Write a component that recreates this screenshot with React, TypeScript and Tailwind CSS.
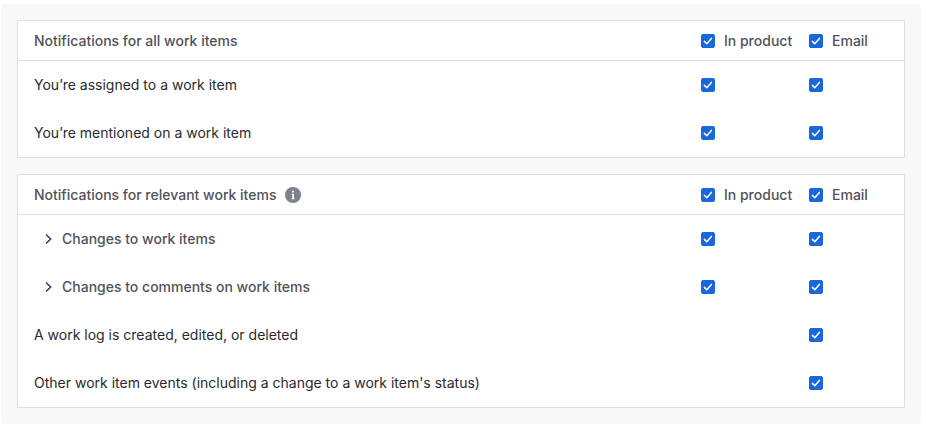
import { useState } from "react";

type Channel = "product" | "email";

interface Row {
  id: string;
  label: string;
  channels: Channel[];
  expandable?: boolean;
}

interface Group {
  id: string;
  title: string;
  info?: boolean;
  rows: Row[];
}

const CHANNELS: { id: Channel; label: string }[] = [
  { id: "product", label: "In product" },
  { id: "email", label: "Email" },
];

const GROUPS: Group[] = [
  {
    id: "all",
    title: "Notifications for all work items",
    rows: [
      { id: "assigned", label: "You’re assigned to a work item", channels: ["product", "email"] },
      { id: "mentioned", label: "You’re mentioned on a work item", channels: ["product", "email"] },
    ],
  },
  {
    id: "relevant",
    title: "Notifications for relevant work items",
    info: true,
    rows: [
      { id: "changes", label: "Changes to work items", channels: ["product", "email"], expandable: true },
      { id: "comments", label: "Changes to comments on work items", channels: ["product", "email"], expandable: true },
      { id: "worklog", label: "A work log is created, edited, or deleted", channels: ["email"] },
      { id: "other", label: "Other work item events (including a change to a work item's status)", channels: ["email"] },
    ],
  },
];

interface CheckboxProps {
  id: string;
  checked: boolean;
  onChange: (checked: boolean) => void;
  label?: string;
}

function Checkbox({ id, checked, onChange, label }: CheckboxProps) {
  return (
    <span className="grid size-3.5 shrink-0">
      <input
        id={id}
        type="checkbox"
        aria-label={label}
        checked={checked}
        onChange={(e) => onChange(e.target.checked)}
        className="peer size-3.5 cursor-pointer appearance-none rounded-[2px] border border-[#8c8f97] bg-white [grid-area:1/1] checked:border-[#1868db] checked:bg-[#1868db]"
      />
      <svg
        viewBox="0 0 14 14"
        aria-hidden="true"
        className="pointer-events-none invisible size-3.5 fill-none stroke-white stroke-[1.5] [grid-area:1/1] peer-checked:visible"
      >
        <path d="M3.4 7.4 5.8 9.8 10.4 4.4" strokeLinecap="round" strokeLinejoin="round" />
      </svg>
    </span>
  );
}

function InfoIcon() {
  return (
    <svg viewBox="0 0 16 16" className="block size-4" aria-hidden="true">
      <circle cx="8" cy="8" r="8" fill="#7d818a" />
      <circle cx="8" cy="4.6" r="1.1" fill="#fff" />
      <path d="M6.6 6.8h2.4v4.4h.6v1H6.4v-1h.9V7.8h-.7z" fill="#fff" />
    </svg>
  );
}

function ChevronIcon() {
  return (
    <svg viewBox="0 0 12 12" className="block size-3 fill-none stroke-[#3b3d42] stroke-[1.5]" aria-hidden="true">
      <path d="M4 1.5 8.7 6 4 10.5" />
    </svg>
  );
}

function NotificationTable({ group }: { group: Group }) {
  const [values, setValues] = useState<Record<string, boolean>>(() =>
    Object.fromEntries(group.rows.flatMap((row) => row.channels.map((c) => [`${row.id}-${c}`, true]))),
  );

  const keysFor = (channel: Channel) =>
    group.rows.filter((row) => row.channels.includes(channel)).map((row) => `${row.id}-${channel}`);

  return (
    <section className="rounded-[1px] border border-[#dddee1] bg-white">
      <table className="w-full table-fixed border-separate border-spacing-0 text-left">
        <colgroup>
          <col />
          <col className="w-27" />
          <col className="w-[95px]" />
        </colgroup>
        <thead>
          <tr className="text-[#505258]">
            <th scope="col" className="h-10 border-b border-[#dddee1] p-0 pl-4 font-medium">
              <div className="flex items-center gap-[9px]">
                {group.title}
                {group.info && (
                  <button type="button" aria-label="More information">
                    <InfoIcon />
                  </button>
                )}
              </div>
            </th>
            {CHANNELS.map((channel) => {
              const keys = keysFor(channel.id);
              const id = `${group.id}-${channel.id}`;
              return (
                <th key={channel.id} scope="col" className="h-10 border-b border-[#dddee1] p-0 font-medium">
                  <div className="flex items-center gap-[9px]">
                    <Checkbox
                      id={id}
                      checked={keys.every((key) => values[key])}
                      onChange={(on) =>
                        setValues((prev) => ({ ...prev, ...Object.fromEntries(keys.map((key) => [key, on])) }))
                      }
                    />
                    <label htmlFor={id} className="cursor-pointer whitespace-nowrap">
                      {channel.label}
                    </label>
                  </div>
                </th>
              );
            })}
          </tr>
        </thead>
        <tbody>
          {group.rows.map((row) => (
            <tr key={row.id} className="h-12">
              <th scope="row" className="p-0 pl-4 font-normal">
                {row.expandable ? (
                  <button
                    type="button"
                    aria-expanded={false}
                    className="flex cursor-pointer items-center gap-2 pl-2 font-medium text-[#505258]"
                  >
                    <ChevronIcon />
                    {row.label}
                  </button>
                ) : (
                  row.label
                )}
              </th>
              {CHANNELS.map((channel) => {
                const key = `${row.id}-${channel.id}`;
                return (
                  <td key={channel.id} className="p-0">
                    {row.channels.includes(channel.id) && (
                      <Checkbox
                        id={key}
                        label={`${row.label}: ${channel.label}`}
                        checked={values[key]}
                        onChange={(on) => setValues((prev) => ({ ...prev, [key]: on }))}
                      />
                    )}
                  </td>
                );
              })}
            </tr>
          ))}
        </tbody>
      </table>
    </section>
  );
}

export default function App() {
  return (
    <div className="bg-white pt-1 pr-[5px] pb-px pl-px font-['Inter',sans-serif] text-sm text-[#292a2e]">
      <main className="flex flex-col gap-4 rounded bg-[#f8f8f8] p-4">
        {GROUPS.map((group) => (
          <NotificationTable key={group.id} group={group} />
        ))}
      </main>
    </div>
  );
}
